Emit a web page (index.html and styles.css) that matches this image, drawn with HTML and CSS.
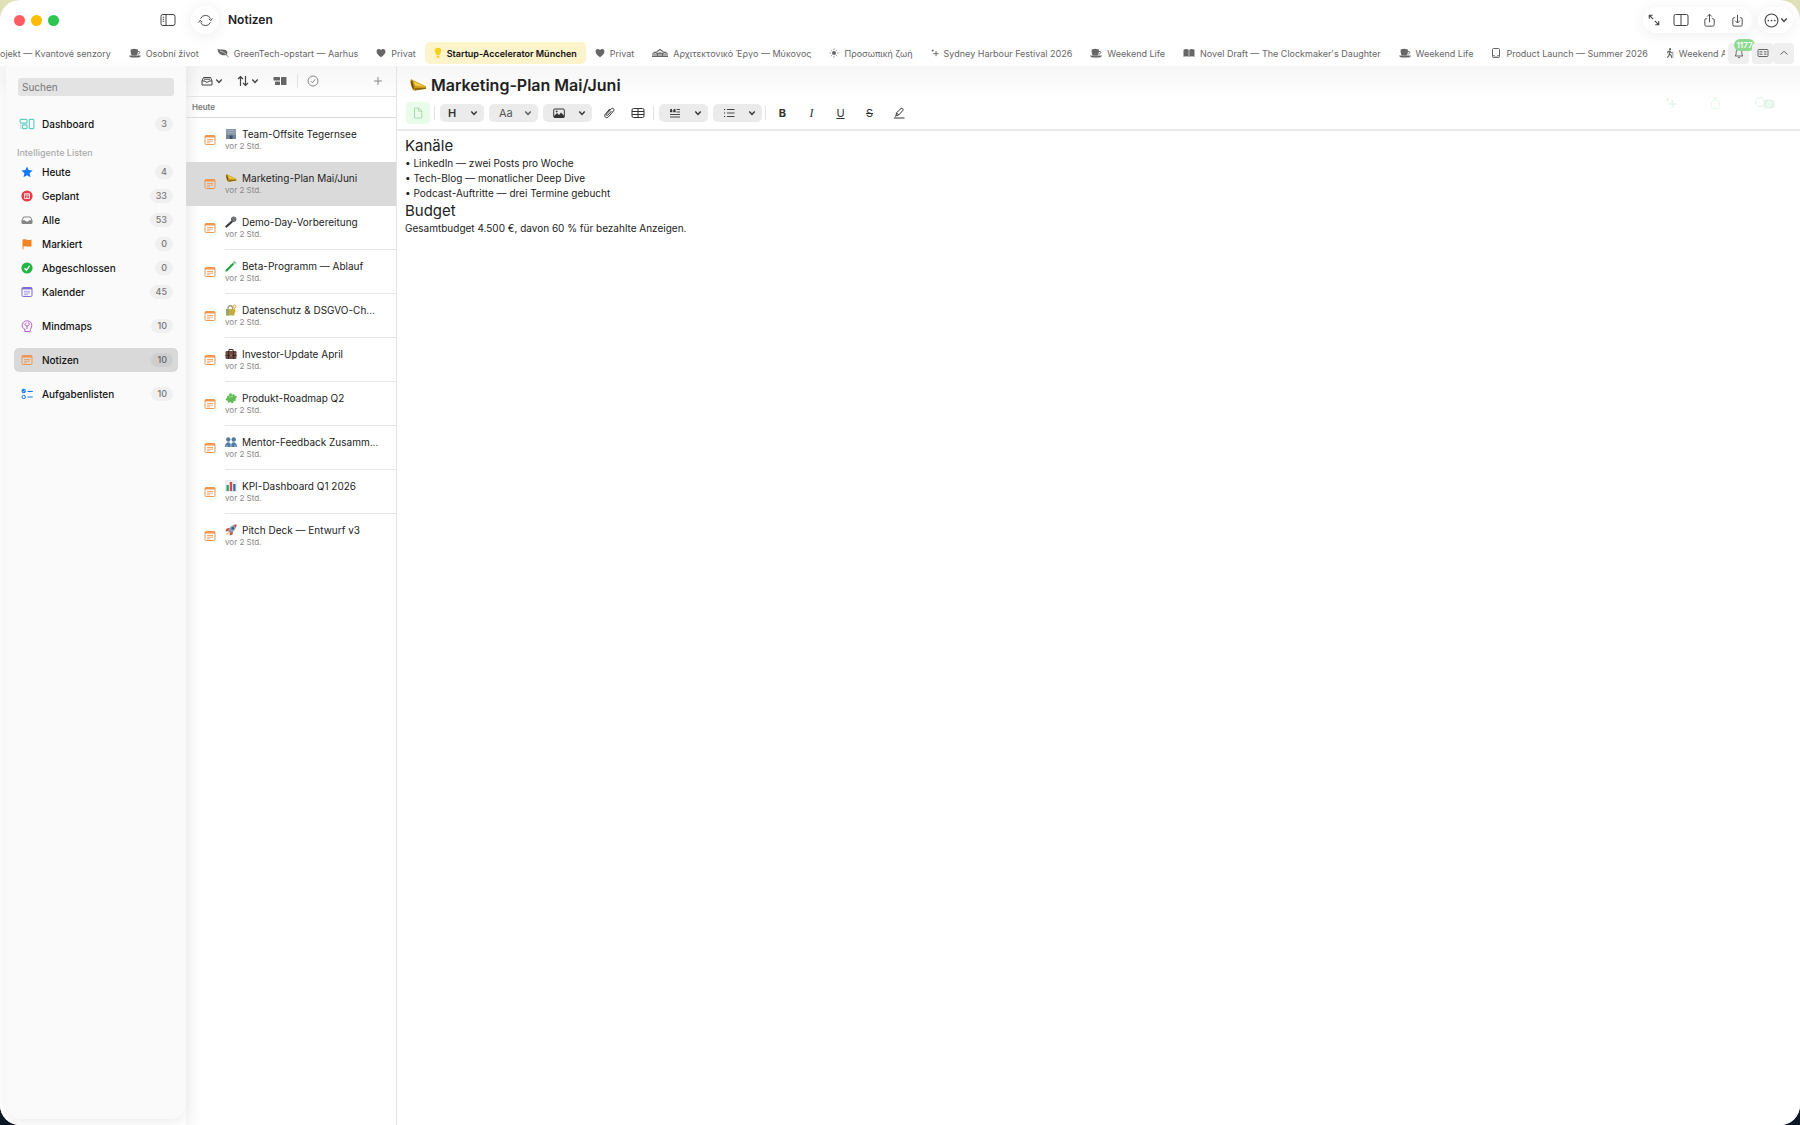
FILE: index.html
```html
<!DOCTYPE html>
<html lang="de">
<head>
    <meta charset="UTF-8">
    <title>Notizen</title>
    <link rel="stylesheet" href="styles.css">
</head>
<body>

<!-- Icons -->
<svg class="sprite" aria-hidden="true">
    <symbol id="sidebar" viewBox="0 0 16 14"><rect x="1" y="1.5" width="14" height="11" rx="2"/><path d="M6 1.5v11M2.7 4.3h1.5M2.7 6.3h1.5M2.7 8.3h1.5"/></symbol>
    <symbol id="sync" viewBox="0 0 16 16"><path d="M2.7 6.2A5.7 5.7 0 0 1 13.3 6M13.3 9.8A5.7 5.7 0 0 1 2.7 10M11.4 6.2l2.4 2 1.5-2.5M4.6 9.8L2.2 7.8.7 10.2"/></symbol>
    <symbol id="expand" viewBox="0 0 14 14"><path stroke-width="1.300" d="M2 2l4 4M8 8l4 4M1.500 5.500v-4h4M12.500 8.500v4h-4"/></symbol>
    <symbol id="split" viewBox="0 0 16 14"><rect x="1" y="1.500" width="14" height="11" rx="1.500"/><path d="M8 1.500v11"/></symbol>
    <symbol id="share" viewBox="0 0 14 16"><path d="M4.500 6H3.500A1.500 1.500 0 0 0 2 7.500v5A1.500 1.500 0 0 0 3.500 14h7a1.500 1.500 0 0 0 1.500-1.500v-5A1.500 1.500 0 0 0 10.500 6h-1M7 10V1.500M4.500 3.800L7 1.300l2.500 2.500"/></symbol>
    <symbol id="download" viewBox="0 0 14 16"><path d="M4.500 5H3.500A1.500 1.500 0 0 0 2 6.500v6A1.500 1.500 0 0 0 3.500 14h7a1.500 1.500 0 0 0 1.500-1.500v-6A1.500 1.500 0 0 0 10.500 5h-1M7 2v8.500M4.500 8.200L7 10.700l2.500-2.500"/></symbol>
    <symbol id="more" viewBox="0 0 14 14"><circle cx="7" cy="7" r="6"/><path stroke-width="1.600" stroke-linecap="round" d="M4 7h.01M7 7h.01M10 7h.01"/></symbol>
    <symbol id="down" viewBox="0 0 8 8"><path stroke-width="1.400" d="M1.300 2.600L4 5.400l2.700-2.800"/></symbol>
    <symbol id="up" viewBox="0 0 10 10"><path d="M1.500 6.500L5 3.300l3.500 3.200"/></symbol>
    <symbol id="bell" viewBox="0 0 10 12"><path d="M1.200 9c1.300-1.200.8-3.500 1.200-4.800a2.700 2.700 0 0 1 5.200 0C8 5.500 7.500 7.800 8.800 9zM4 10.600h2"/></symbol>
    <symbol id="keys" viewBox="0 0 12 10"><rect x="1" y="1.500" width="10" height="7" rx="1"/><path stroke-width=".7" d="M2.500 3.500h3M2.500 5h3M2.500 6.500h3M7 3.500h2.500M7 5h2.500M7 6.500h2.500"/></symbol>

    <symbol id="cup" viewBox="0 0 12 10"><g fill="currentColor" stroke="none"><path d="M1.500 3h7.500l-.5 3A2 2 0 0 1 6.500 7.500H4a2 2 0 0 1-2-1.500z"/><ellipse cx="5.250" cy="2.300" rx="3.700" ry="1.500"/><path d="M0 7.600h12c-.5 1.300-1.500 1.900-2.500 1.900h-7C1.500 9.500.5 8.900 0 7.600z"/></g><path stroke-width=".9" d="M9 3.500h1c1.600 0 1 2.600-1.200 2.600"/></symbol>
    <symbol id="leaf" viewBox="0 0 12 10"><g fill="currentColor" stroke="none"><path d="M.5 1c3 1 8-.2 9.500 2.300 1.200 2-.2 4-2.500 4C3.300 7.500.8 5 .5 1z"/></g><path d="M4 4c3 .5 5 2.500 7.500 5"/><path stroke="#fff" stroke-width=".6" d="M3 3.200c3 .5 4.500 1.500 6 3"/></symbol>
    <symbol id="heart" viewBox="0 0 10 10"><path fill="currentColor" stroke="none" d="M5 9.200C2 7 .6 5.500.6 3.400.6.600 3.900.2 5 2.300 6.100.2 9.400.6 9.400 3.400 9.400 5.500 8 7 5 9.200z"/></symbol>
    <symbol id="bulb" viewBox="0 0 8 12"><path fill="currentColor" stroke="none" d="M4 .8a3.200 3.200 0 0 0-3.200 3.300C.8 5.800 2.300 6.500 2.500 8.300h3C5.700 6.500 7.200 5.800 7.200 4.100A3.200 3.200 0 0 0 4 .8zM2.600 8.900h2.800L5 11H3z"/></symbol>
    <symbol id="house" viewBox="0 0 16 10"><path stroke-width="1.100" d="M0 8.500h16M1 8.500V5.500L3 4l2 1.500v3M11 8.500v-3L13 4l2 1.500v3M4.500 4L8 1.500 11.500 4M6 8.500V5.200h4v3.300M8 4v4.500M3 5.500v3M13 5.500v3"/></symbol>
    <symbol id="sun" viewBox="0 0 10 10"><circle cx="5" cy="5" r="2" fill="currentColor" stroke="none"/><path stroke-width=".8" d="M5 .5v1.300M5 8.200v1.300M.5 5h1.300M8.200 5h1.300M1.800 1.800l.9.9M7.300 7.300l.9.9M1.800 8.200l.9-.9M7.300 2.700l.9-.9"/></symbol>
    <symbol id="sparkle" viewBox="0 0 10 10"><path stroke-width="1.200" d="M6.300 2.500v6.500M3 5.800h6.500M2.200.8v2.400M1 2h2.400"/></symbol>
    <symbol id="book" viewBox="0 0 12 10"><path fill="currentColor" stroke="none" d="M.5 1.800C2.300.7 4.300.8 5.700 1.800v7C4.300 7.900 2.300 7.900.5 8.800zM11.500 1.800C9.700.7 7.700.8 6.300 1.800v7c1.400-.9 3.400-.9 5.200 0z"/></symbol>
    <symbol id="device" viewBox="0 0 10 12"><rect x="1.500" y="1.500" width="7" height="9" rx="1"/><path d="M1.500 8.800h2.500M6 8.800h2.500M3.500 10.200h3"/></symbol>
    <symbol id="walk" viewBox="0 0 9 12"><circle cx="4.600" cy="1.700" r="1.200" fill="currentColor" stroke="none"/><path stroke-width="1.300" d="M4.300 3.500L3.800 7l2 1.500.5 3M3.800 7l-.6 2L1.500 11.300M4.300 3.500L2 4.700v2M4.500 4l1.200 1.500 1.500.3"/><path stroke-width=".7" d="M7.700 4.500v7"/></symbol>

    <symbol id="dashboard" viewBox="0 0 14 10"><rect x="1" y="1" width="6" height="3.200" rx=".8"/><rect x="3" y="5.800" width="4" height="3.200" rx=".8"/><rect x="9" y="1" width="4" height="8" rx=".8"/><path d="M1 6.500h1M1 8.500h1"/></symbol>
    <symbol id="star" viewBox="0 0 12 12"><path fill="currentColor" stroke="none" d="M6 .4l1.600 3.700 4 .4-3 2.700.9 4L6 9.200l-3.500 2 .9-4-3-2.700 4-.4z"/></symbol>
    <symbol id="planned" viewBox="0 0 12 12"><circle cx="6" cy="6" r="5.600" fill="currentColor" stroke="none"/><path stroke="#fff" stroke-width=".8" d="M3.500 3.700h5v4.800h-5zM3.500 5h5M5 6.200h.7M6.600 6.200h.7M5 7.500h.7M6.600 7.500h.7"/></symbol>
    <symbol id="tray" viewBox="0 0 12 12"><path d="M1 6.800L2.500 3h7L11 6.800"/><path fill="currentColor" stroke="none" d="M.5 6.200H4c.3 1.700 3.700 1.700 4 0h3.500v2.600c0 .7-.5 1.200-1.200 1.200H1.700C1 10 .5 9.500.5 8.800z"/></symbol>
    <symbol id="flag" viewBox="0 0 12 12"><path fill="currentColor" stroke="none" d="M1.500 1.700C4 .5 6 3 10.500 1.500v6.800C7 9.600 5 7.500 2.500 8.600v2.600h-1z"/></symbol>
    <symbol id="done" viewBox="0 0 12 12"><circle cx="6" cy="6" r="5.600" fill="currentColor" stroke="none"/><path stroke="#fff" stroke-width="1.300" d="M3.500 6.200l1.900 2 3.200-4.300"/></symbol>
    <symbol id="calendar" viewBox="0 0 12 12"><rect x="1" y="1.500" width="10" height="9" rx="1.200"/><path stroke-width="1.800" d="M1 2.500h10"/><path stroke-width=".6" d="M3 5.300h6M3 7h6M3 8.700h4"/></symbol>
    <symbol id="mind" viewBox="0 0 12 12"><path d="M3.800 11.500V9C1.500 8.500.8 6 1.300 4.500 2 2 4 .7 6 .8c3 0 5 2 4.800 4.700C10.700 8 9.500 8.500 9 11.500zM6 9V6M6 6C3.500 6 3 3 5.500 3M6 6c2.500 0 3-3 1-3.300"/></symbol>
    <symbol id="note" viewBox="0 0 12 12"><rect x="1" y="1.500" width="10" height="9" rx="1.200"/><path stroke-width="2" d="M1 2.500h10"/><path stroke-width=".8" d="M3 5.500h6M3 7.200h6M3 8.800h3"/></symbol>
    <symbol id="tasks" viewBox="0 0 12 12"><circle cx="2.700" cy="3" r="2.200" fill="currentColor" stroke="none"/><circle cx="2.700" cy="9" r="1.700"/><path d="M6.500 3.500h5.300M6.500 9h5.300"/><path stroke="#fff" stroke-width=".7" d="M1.700 3l.8.8 1.300-1.500"/></symbol>

    <symbol id="archive" viewBox="0 0 12 12"><path d="M1 6l1.500-3.500h7L11 6v4H1zM1 6h3c.3 1.700 3.700 1.700 4 0h3M3 4.200h6"/></symbol>
    <symbol id="sort" viewBox="0 0 12 12"><path stroke-width="1.200" d="M3.500 11V1.500M1 4l2.500-2.500L6 4M8.500 1v9.500M6 8l2.500 2.500L11 8"/></symbol>
    <symbol id="blocks" viewBox="0 0 14 10"><g fill="currentColor" stroke="none"><rect x=".5" y="1" width="6.500" height="3.500" rx=".6"/><rect x="2" y="5.500" width="5" height="3.500" rx=".6"/><rect x="8" y="1" width="5.500" height="8" rx=".6"/></g></symbol>
    <symbol id="check" viewBox="0 0 12 12"><circle cx="6" cy="6" r="5"/><path d="M4 6.300l1.500 1.500 2.600-3.500"/></symbol>
    <symbol id="plus" viewBox="0 0 10 10"><path d="M5 1v8M1 5h8"/></symbol>

    <symbol id="page" viewBox="0 0 12 12"><path d="M2.500 1h4.300l3 3v7H2.500zM6.500 1v3.200h3.300"/></symbol>
    <symbol id="image" viewBox="0 0 12 12"><rect x=".7" y="2" width="10.600" height="8.500" rx="1"/><path fill="currentColor" stroke="none" d="M1 9L4 6l2 2 2-2.500 3.300 3.500v1.500H1z"/><circle cx="3.700" cy="4.400" r=".9" fill="currentColor" stroke="none"/></symbol>
    <symbol id="clip" viewBox="0 0 12 12"><path d="M8.500 4L4.800 8.200c-.8.9-2-.2-1.300-1.100L8 2c1.700-1.800 4 .1 2.500 2L5.500 9.800c-2 2.200-5-.2-3.200-2.600L6.800 2"/></symbol>
    <symbol id="table" viewBox="0 0 14 12"><rect x="1" y="1.500" width="12" height="9" rx="1.500"/><path d="M1 4.500h12M1 7.500h12M7 1.500v9"/></symbol>
    <symbol id="quote" viewBox="0 0 12 12"><path stroke-width=".9" d="M7.500 2.500H11M7.500 5H11M1 7.500h10M1 10h10"/><path fill="currentColor" stroke="none" d="M1 5.300V3.500C1 2.300 1.800 1.800 3 1.700v1l-.6.600H3.400v2zM4.300 5.300V3.500c0-1.200.8-1.700 2-1.800v1l-.6.600h1v2z"/></symbol>
    <symbol id="list" viewBox="0 0 12 12"><path stroke-width=".9" d="M4 2.500h7.500M4 6h7.500M4 9.500h7.500"/><path d="M1 2.500h1.200M1 6h1.200M1 9.500h1.200"/></symbol>
    <symbol id="pen" viewBox="0 0 12 12"><path d="M.8 11h10.700M3 8.800l.5-3L8 1.500c1-.8 2.700.8 1.900 1.900L5.700 8zM3.500 5.800L5.700 8M2 9.500l1-.7"/></symbol>
    <symbol id="timer" viewBox="0 0 12 16"><path d="M4 2h4M6 2v2M6 4c-6 .5-6 10 0 10s6-9.500 0-10z"/></symbol>
    <symbol id="chat" viewBox="0 0 22 14"><circle cx="6" cy="6" r="4.500"/><rect x="10" y="4" width="10" height="8" rx="2" fill="currentColor"/><circle cx="15" cy="8" r="2" stroke="#fff"/></symbol>

    <!-- Farbige Symbole der Notizen -->
    <symbol id="building" viewBox="0 0 12 12"><path fill="#8a9aab" d="M1 1h10v10H1z"/><path fill="#6f8499" d="M1 7h10v4H1z"/><path stroke="#a4b2c0" stroke-width=".7" d="M2.500 2.500h7M2.500 4.500h7"/><path fill="#3c4f66" d="M4.500 7.500h3V11h-3z"/></symbol>
    <symbol id="horn" viewBox="0 0 18 14"><path fill="#cf9a18" d="M2.500 1.500L17 8.300v2.400L5.500 12.500z"/><path fill="#f3d24d" d="M4.500 3.500L16.500 9 6 7.500z"/><path fill="#8a6410" d="M5.500 12.500L5 10.300l12-.6v1z"/><ellipse cx="3.600" cy="6.900" rx="1.700" ry="5.700" transform="rotate(-15 3.600 6.900)" fill="#b98a17"/><ellipse cx="3.400" cy="6.900" rx=".7" ry="4.300" transform="rotate(-15 3.400 6.900)" fill="#5d440f"/></symbol>
    <symbol id="mic" viewBox="0 0 12 12"><path stroke="#34363a" stroke-width="2.200" stroke-linecap="round" d="M1.500 10.500L7 5.500"/><circle cx="8.700" cy="3.300" r="2.700" fill="#65686d"/><path stroke="#a5a8ad" stroke-width=".5" d="M7.300 2l3 3M8.600 1.100l2.400 2.400"/></symbol>
    <symbol id="tube" viewBox="0 0 12 12"><path stroke="#b7ddbc" stroke-width="2.400" stroke-linecap="round" d="M1.500 10.500L9.500 2.500"/><path stroke="#20a747" stroke-width="2" stroke-linecap="round" d="M1.500 10.500L7.800 4.300"/><path stroke="#75858b" d="M8.500 1.200l2.400 2.400"/></symbol>
    <symbol id="lock" viewBox="0 0 12 12"><path stroke="#9b9b91" stroke-width="1.300" d="M3 6V4c0-3 4.500-3 4.500 0v2"/><rect x="1" y="5" width="8.500" height="6.500" rx="1" fill="#c5ac42"/><path fill="#8faa68" d="M1 5h3v6.500H2a1 1 0 0 1-1-1z"/><circle cx="9.500" cy="2.500" r="1.500" stroke="#e6a91f"/><path stroke="#e6a91f" d="M9.500 4v5M9.500 7H11"/></symbol>
    <symbol id="case" viewBox="0 0 12 12"><path stroke="#40312e" d="M4 3.500v-2h4v2"/><rect x=".5" y="3" width="11" height="8" rx="1.200" fill="#6d4a40"/><path fill="#3e2b28" d="M.5 7h11v1H.5zM3 3h1v8H3zM8 3h1v8H8z"/><path fill="#d9b25c" d="M5.500 6.700h1v1.500h-1z"/></symbol>
    <symbol id="puzzle" viewBox="0 0 12 12"><path fill="#60bd55" d="M2 4l2.300-.5C3.500 1 6.800.5 7 3l2-1 1 2c2-.5 2.500 2 .5 2.500l.5 2-2.500.7C9 11.500 6 12 5.700 9.800L3.500 11l-1-2.500C.2 9 0 6.300 2.200 6z"/><path stroke="#a8e09b" d="M4 5l4-.5"/></symbol>
    <symbol id="people" viewBox="0 0 12 12"><g fill="#527ba0"><circle cx="3.300" cy="3.500" r="2.200"/><circle cx="8.700" cy="3.500" r="2.200"/><path d="M0 11c0-6 6-6 6-1.500C6 5 12 5 12 11z"/></g><path stroke="#a6c6df" d="M6 7v4M2 9v2M10 9v2"/></symbol>
    <symbol id="chart" viewBox="0 0 12 12"><rect x=".8" y=".8" width="10.400" height="10.400" fill="#edf2f4" stroke="#cdd8dd" stroke-width=".5"/><path fill="#27a568" d="M1.500 5h2.300v6H1.500z"/><path fill="#d94743" d="M4.800 2h2.400v9H4.800z"/><path fill="#2d70b9" d="M8.200 4h2.300v7H8.200z"/></symbol>
    <symbol id="rocket" viewBox="0 0 12 12"><path fill="#d7473f" d="M4.500 4L1.500 4.500.5 7.500l3-.5zM8 7.500l-.5 3-3 1 .5-3.500z"/><path fill="#8e9ba8" d="M11.500.5C7 .5 4 3.500 3 7l2 2c3.500-1 6.500-4 6.500-8.500z"/><path fill="#d7473f" d="M11.500.5L8.700 1l2.300 2.300z"/><circle cx="7.800" cy="4.200" r="1.200" fill="#315c89"/><path fill="#f2a12b" d="M3 8L.7 11.300 4 9z"/></symbol>
</svg>

<div class="window">
    <header class="titlebar">
        <div class="lights"><span class="light red"></span><span class="light yellow"></span><span class="light green"></span></div>
        <button class="icon-btn toggle" aria-label="Seitenleiste"><svg class="icon wide"><use href="#sidebar"/></svg></button>
        <button class="icon-btn sync" aria-label="Synchronisieren"><svg class="icon large"><use href="#sync"/></svg></button>
        <h1>Notizen</h1>
        <div class="pill actions">
            <button class="icon-btn" aria-label="Vergrößern"><svg class="icon"><use href="#expand"/></svg></button>
            <button class="icon-btn" aria-label="Teilen der Ansicht"><svg class="icon wide"><use href="#split"/></svg></button>
            <button class="icon-btn" aria-label="Teilen"><svg class="icon large"><use href="#share"/></svg></button>
            <button class="icon-btn" aria-label="Laden"><svg class="icon large"><use href="#download"/></svg></button>
        </div>
        <button class="pill more" aria-label="Mehr"><svg class="icon large"><use href="#more"/></svg><svg class="icon tiny"><use href="#down"/></svg></button>
    </header>

    <nav class="tabbar">
        <div class="tabs">
            <a class="tab first" href="#">ojekt — Kvantové senzory</a>
            <a class="tab" href="#"><svg class="icon"><use href="#cup"/></svg>Osobní život</a>
            <a class="tab" href="#"><svg class="icon"><use href="#leaf"/></svg>GreenTech-opstart — Aarhus</a>
            <a class="tab" href="#"><svg class="icon small"><use href="#heart"/></svg>Privat</a>
            <a class="tab active" href="#"><svg class="icon tiny"><use href="#bulb"/></svg>Startup-Accelerator München</a>
            <a class="tab" href="#"><svg class="icon small"><use href="#heart"/></svg>Privat</a>
            <a class="tab" href="#"><svg class="icon wide"><use href="#house"/></svg>Αρχιτεκτονικό Έργο — Μύκονος</a>
            <a class="tab" href="#"><svg class="icon small"><use href="#sun"/></svg>Προσωπική ζωή</a>
            <a class="tab" href="#"><svg class="icon tiny"><use href="#sparkle"/></svg>Sydney Harbour Festival 2026</a>
            <a class="tab" href="#"><svg class="icon"><use href="#cup"/></svg>Weekend Life</a>
            <a class="tab" href="#"><svg class="icon"><use href="#book"/></svg>Novel Draft — The Clockmaker's Daughter</a>
            <a class="tab" href="#"><svg class="icon"><use href="#cup"/></svg>Weekend Life</a>
            <a class="tab" href="#"><svg class="icon small"><use href="#device"/></svg>Product Launch — Summer 2026</a>
            <a class="tab" href="#"><svg class="icon tiny"><use href="#walk"/></svg>Weekend Ad</a>
        </div>
        <button class="tab-btn bell" aria-label="Mitteilungen"><svg class="icon"><use href="#bell"/></svg><span class="badge">1177</span></button>
        <div class="tab-group">
            <button class="tab-btn" aria-label="Übersicht"><svg class="icon"><use href="#keys"/></svg></button>
            <button class="tab-btn" aria-label="Einklappen"><svg class="icon small"><use href="#up"/></svg></button>
        </div>
    </nav>

    <div class="content">
        <aside class="sidebar">
            <input class="search" type="search" placeholder="Suchen" aria-label="Suchen">
            <a class="item" href="#"><svg class="icon wide teal"><use href="#dashboard"/></svg>Dashboard<span class="count">3</span></a>
            <h2>Intelligente Listen</h2>
            <a class="item" href="#"><svg class="icon blue"><use href="#star"/></svg>Heute<span class="count">4</span></a>
            <a class="item" href="#"><svg class="icon crimson"><use href="#planned"/></svg>Geplant<span class="count">33</span></a>
            <a class="item" href="#"><svg class="icon gray"><use href="#tray"/></svg>Alle<span class="count">53</span></a>
            <a class="item" href="#"><svg class="icon orange"><use href="#flag"/></svg>Markiert<span class="count">0</span></a>
            <a class="item" href="#"><svg class="icon lime"><use href="#done"/></svg>Abgeschlossen<span class="count">0</span></a>
            <a class="item" href="#"><svg class="icon violet"><use href="#calendar"/></svg>Kalender<span class="count">45</span></a>
            <a class="item group" href="#"><svg class="icon purple"><use href="#mind"/></svg>Mindmaps<span class="count">10</span></a>
            <a class="item group selected" href="#"><svg class="icon copper"><use href="#note"/></svg>Notizen<span class="count">10</span></a>
            <a class="item group" href="#"><svg class="icon blue"><use href="#tasks"/></svg>Aufgabenlisten<span class="count">10</span></a>
        </aside>

        <section class="notes">
            <div class="notes-bar">
                <button class="icon-btn" aria-label="Ablage"><svg class="icon"><use href="#archive"/></svg><svg class="icon tiny"><use href="#down"/></svg></button>
                <button class="icon-btn" aria-label="Sortieren"><svg class="icon"><use href="#sort"/></svg><svg class="icon tiny"><use href="#down"/></svg></button>
                <button class="icon-btn dim" aria-label="Ansicht"><svg class="icon blocks"><use href="#blocks"/></svg></button>
                <span class="line"></span>
                <button class="icon-btn light-icon" aria-label="Auswählen"><svg class="icon"><use href="#check"/></svg></button>
                <button class="icon-btn light-icon add" aria-label="Neu"><svg class="icon small"><use href="#plus"/></svg></button>
            </div>
            <h2>Heute</h2>
            <div id="noteList"></div>
        </section>

        <main class="editor">
            <div class="editor-title"><svg class="icon horn"><use href="#horn"/></svg><h2>Marketing-Plan Mai/Juni</h2></div>
            <div class="toolbar">
                <button class="page-btn" aria-label="Vorlage"><svg class="icon"><use href="#page"/></svg></button>
                <span class="line"></span>
                <button class="menu-btn heading">H<svg class="icon tiny"><use href="#down"/></svg></button>
                <button class="menu-btn letters">Aa<svg class="icon tiny"><use href="#down"/></svg></button>
                <button class="menu-btn" aria-label="Bild"><svg class="icon"><use href="#image"/></svg><svg class="icon tiny"><use href="#down"/></svg></button>
                <button class="tool" aria-label="Anhang"><svg class="icon"><use href="#clip"/></svg></button>
                <button class="tool" aria-label="Tabelle"><svg class="icon blocks"><use href="#table"/></svg></button>
                <span class="line"></span>
                <button class="menu-btn" aria-label="Zitat"><svg class="icon"><use href="#quote"/></svg><svg class="icon tiny"><use href="#down"/></svg></button>
                <button class="menu-btn" aria-label="Liste"><svg class="icon"><use href="#list"/></svg><svg class="icon tiny"><use href="#down"/></svg></button>
                <span class="line"></span>
                <button class="tool"><b>B</b></button>
                <button class="tool"><i>I</i></button>
                <button class="tool"><u>U</u></button>
                <button class="tool"><s>S</s></button>
                <button class="tool" aria-label="Markieren"><svg class="icon"><use href="#pen"/></svg></button>
                <div class="ghost">
                    <svg class="icon"><use href="#sparkle"/></svg>
                    <svg class="icon large"><use href="#timer"/></svg>
                    <svg class="icon chat"><use href="#chat"/></svg>
                </div>
            </div>
            <article class="text">
                <h3>Kanäle</h3>
                <p>• LinkedIn — zwei Posts pro Woche</p>
                <p>• Tech-Blog — monatlicher Deep Dive</p>
                <p>• Podcast-Auftritte — drei Termine gebucht</p>
                <h3>Budget</h3>
                <p>Gesamtbudget 4.500 €, davon 60 % für bezahlte Anzeigen.</p>
            </article>
        </main>
    </div>
</div>

<script>
    const notes = [
        ["building", "Team-Offsite Tegernsee"],
        ["horn", "Marketing-Plan Mai/Juni"],
        ["mic", "Demo-Day-Vorbereitung"],
        ["tube", "Beta-Programm — Ablauf"],
        ["lock", "Datenschutz & DSGVO-Ch..."],
        ["case", "Investor-Update April"],
        ["puzzle", "Produkt-Roadmap Q2"],
        ["people", "Mentor-Feedback Zusamm..."],
        ["chart", "KPI-Dashboard Q1 2026"],
        ["rocket", "Pitch Deck — Entwurf v3"]
    ];

    function renderNotes(selected) {
        const container = document.getElementById("noteList");
        notes.forEach(([icon, title], index) => {
            const row = document.createElement("a");
            row.href = "#";
            row.className = index === selected ? "note selected" : "note";
            row.innerHTML = `
                <svg class="icon copper"><use href="#note"/></svg>
                <div class="note-body">
                    <div class="note-title"><svg class="icon emoji"><use href="#${icon}"/></svg><span></span></div>
                    <div class="note-time">vor 2 Std.</div>
                </div>`;
            row.querySelector("span").textContent = title;
            container.appendChild(row);
        });
    }

    renderNotes(1);
</script>
</body>
</html>
```
FILE: styles.css
```css
* {
    box-sizing: border-box;
}

body {
    margin: 0;
    font-family: Inter, "Noto Sans", sans-serif;
    font-size: 10px;
    color: #222;
    background: linear-gradient(#dfe0b8 50%, #0d1826 50%);
}

h1, h2, h3, p {
    margin: 0;
}

a {
    color: inherit;
    text-decoration: none;
}

button {
    display: flex;
    align-items: center;
    justify-content: center;
    padding: 0;
    border: none;
    background: none;
    font: inherit;
    color: inherit;
}

.sprite {
    display: none;
}

.icon {
    width: 12px;
    height: 12px;
    flex: none;
    fill: none;
    stroke: currentColor;
}

.icon.tiny {
    width: 8px;
}

.icon.small {
    width: 10px;
}

.icon.wide {
    width: 16px;
    height: 14px;
}

.icon.blocks {
    width: 14px;
}

.icon.large {
    width: 15px;
    height: 15px;
}

/* Symbole ohne Kontur */
.icon.emoji, .icon.horn {
    stroke: none;
}

.window {
    display: flex;
    flex-direction: column;
    min-height: 100vh;
    border-radius: 20px;
    background: #fff;
    overflow: hidden;
}

/* Titelleiste */
.titlebar {
    display: flex;
    align-items: center;
    height: 40px;
    padding: 0 7px 0 14px;
    color: #444;
}

.lights {
    display: flex;
    gap: 6px;
}

.light {
    width: 11px;
    height: 11px;
    border-radius: 50%;
}

.light.red { background: #ff5b60; }
.light.yellow { background: #fdbc05; }
.light.green { background: #2bc552; }

.toggle {
    margin-left: 101px;
}

.sync {
    width: 28px;
    height: 28px;
    margin-left: 15px;
    border-radius: 50%;
    box-shadow: 0 2px 16px rgba(0, 0, 0, 0.08);
}

.titlebar h1 {
    margin-left: 9px;
    font-size: 12px;
    line-height: 16px;
    font-weight: 600;
    color: #222;
}

.pill {
    display: flex;
    align-items: center;
    height: 26px;
    border-radius: 13px;
    background: #fff;
    box-shadow: 0 2px 14px rgba(0, 0, 0, 0.07);
}

.pill.actions {
    gap: 13px;
    margin-left: auto;
    padding: 0 7px 0 5px;
}

.pill.more {
    gap: 1px;
    margin-left: 6px;
    padding: 0 5px 0 6px;
}

/* Tableiste */
.tabbar {
    display: flex;
    align-items: center;
    height: 26px;
    padding-right: 6px;
    color: #666;
}

.tabs {
    display: flex;
    flex: 1;
    min-width: 0;
    overflow: hidden;
}

.tab {
    display: flex;
    flex: none;
    align-items: center;
    gap: 5px;
    height: 22px;
    padding: 0 9px;
    font-size: 9px;
    white-space: nowrap;
}

.tab.first {
    padding-left: 0;
}

.tab.active {
    border-radius: 5px;
    background: #fdf4cc;
    color: #111;
    font-weight: 600;
}

.tab.active .icon {
    color: #f7cf1d;
}

.tab-btn {
    position: relative;
    width: 21px;
    height: 21px;
    border-radius: 4px;
    background: #efefef;
}

.tab-group {
    display: flex;
    margin-left: 3px;
}

.tab-btn.bell {
    margin-left: 3px;
}

.badge {
    position: absolute;
    top: -4px;
    left: 6px;
    width: 21px;
    border-radius: 6px;
    background: #8cd98f;
    color: #fff;
    font-size: 8px;
    font-weight: 600;
    line-height: 12px;
    text-align: center;
}

.content {
    display: flex;
    flex: 1;
    background: linear-gradient(#f6f6f6, #fff 34px);
}

/* Seitenleiste */
.sidebar {
    width: 180px;
    margin: 0 0 6px 6px;
    padding: 12px 8px;
    border-radius: 0 0 16px 16px;
    background: #fafafa;
    box-shadow: 0 4px 14px rgba(0, 0, 0, 0.07);
}

.search {
    display: block;
    width: 156px;
    height: 18px;
    margin: 0 4px 16px;
    padding: 0 4px;
    border: none;
    border-radius: 3px;
    background: #e3e3e3;
    font: inherit;
}

.search::placeholder {
    color: #777;
}

.sidebar h2 {
    height: 24px;
    padding: 9px 3px 0;
    font-size: 9px;
    line-height: 15px;
    font-weight: 500;
    color: #aaa;
}

.item {
    display: flex;
    align-items: center;
    gap: 9px;
    height: 24px;
    padding: 0 5px 0 7px;
    border-radius: 5px;
    font-weight: 500;
    color: #111;
}

.item .icon.wide {
    margin: 0 -2px;
}

.item.group {
    margin-top: 10px;
}

.item.selected {
    background: #d9d9d9;
}

.count {
    margin-left: auto;
    padding: 0 6px;
    border-radius: 7px;
    background: #f0f0f0;
    color: #777;
    font-size: 9px;
    line-height: 14px;
}

.selected .count {
    background: #cecece;
    color: #666;
}

.teal { color: #5ccfc0; }
.blue { color: #1479f5; }
.crimson { color: #e93b48; }
.gray { color: #858585; }
.orange { color: #f28322; }
.lime { color: #24b545; }
.violet { color: #7b6cd9; }
.purple { color: #ba5cd2; }
.copper { color: #ef9650; }

/* Notizliste */
.notes {
    width: 211px;
    border-right: 1px solid #e4e4e4;
    background: linear-gradient(90deg, rgba(0, 0, 0, 0.03), transparent 16px);
}

.notes-bar {
    display: flex;
    align-items: center;
    height: 31px;
    padding: 0 13px 0 15px;
    border-bottom: 1px solid #e4e4e4;
    color: #444;
}

.notes-bar .icon-btn {
    gap: 2px;
    margin-right: 14px;
}

.notes-bar .dim {
    margin-right: 10px;
    color: #666;
}

.notes-bar .light-icon {
    margin-left: 9px;
    color: #888;
}

.notes-bar .add {
    margin: 0 0 0 auto;
}

.line {
    width: 1px;
    height: 14px;
    background: #e2e2e2;
}

.notes h2 {
    height: 21px;
    padding-left: 6px;
    border-bottom: 1px solid #dadada;
    font-size: 8px;
    line-height: 21px;
    font-weight: 600;
    color: #777;
}

.note {
    display: flex;
    align-items: center;
    height: 44px;
    padding-left: 18px;
}

.note-body {
    flex: 1;
    display: flex;
    flex-direction: column;
    justify-content: center;
    height: 44px;
    margin-left: 9px;
    border-bottom: 1px solid #e6e6e6;
}

.note:first-child .note-body, .note:last-child .note-body, .note.selected .note-body {
    border-color: transparent;
}

.note.selected {
    background: #dadada;
}

.note-title {
    display: flex;
    align-items: center;
    gap: 5px;
    line-height: 13px;
    white-space: nowrap;
}

.note-time {
    font-size: 8px;
    line-height: 11px;
    color: #888;
}

/* Editor */
.editor {
    flex: 1;
    min-width: 0;
}

.editor-title {
    display: flex;
    align-items: center;
    gap: 4px;
    height: 37px;
    padding-left: 12px;
}

.editor-title h2 {
    font-size: 16px;
    line-height: 20px;
    font-weight: 600;
}

.icon.horn {
    width: 18px;
    height: 14px;
}

.toolbar {
    display: flex;
    align-items: center;
    height: 28px;
    padding: 0 24px 6px 9px;
    border-bottom: 2px solid #ebebeb;
    color: #333;
}

.page-btn {
    width: 24px;
    height: 22px;
    margin-right: 3px;
    border-radius: 4px;
    background: #e9fbe9;
    color: #a9dcab;
}

.toolbar .line {
    margin: 0 2px 0 1px;
}

.menu-btn {
    justify-content: space-between;
    width: 49px;
    height: 18px;
    margin: 0 2px 0 3px;
    padding: 0 6px 0 10px;
    border-radius: 5px;
    background: #ebebeb;
    font-size: 11px;
}

.menu-btn.heading {
    width: 44px;
    padding-left: 8px;
    font-weight: 600;
}

.menu-btn.letters {
    color: #555;
}

.tool {
    width: 29px;
    height: 20px;
    font-size: 11px;
}

.tool i {
    font-family: "Liberation Serif", serif;
    font-size: 12px;
}

/* Ausgeblendete Aktionen */
.ghost {
    display: flex;
    align-items: center;
    gap: 31px;
    align-self: flex-start;
    height: 0;
    margin-left: auto;
    color: #e2f6e7;
}

.icon.chat {
    width: 22px;
    height: 14px;
}

.text {
    padding: 5px 8px;
    line-height: 15px;
}

.text h3 {
    font-size: 15px;
    line-height: 20px;
    font-weight: 400;
}
```
